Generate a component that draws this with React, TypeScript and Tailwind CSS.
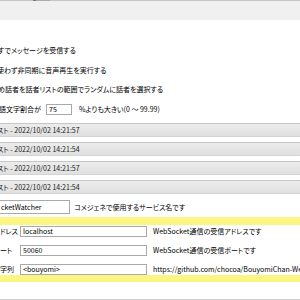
const font = { fontFamily: '"Noto Sans CJK JP", "Noto Sans", sans-serif' }

function Bar({ time }: { time: string }) {
  return (
    <div className="h-[14px] flex items-center border-t border-[#c6c6c6] border-b border-b-[#d4d4d4] bg-gradient-to-b from-[#ececec] to-[#e0e0e0] whitespace-nowrap">
      <span className="-ml-[3px] text-[#222]">スト - 2022/10/02 {time}</span>
    </div>
  )
}

function Field({ label, value, note }: { label: string; value: string; note: string }) {
  return (
    <div className="h-[11px] flex items-center whitespace-nowrap">
      <div className="w-[20px] shrink-0">{label}</div>
      <div className="w-[127px] h-[11px] shrink-0 border border-[#a9a9a9] bg-white flex items-center px-[2px]">{value}</div>
      <div className="ml-[6px]">{note}</div>
    </div>
  )
}

export default function App() {
  return (
    <div
      className="w-[300px] h-[300px] overflow-hidden bg-white text-[7px] leading-none text-black relative [font-feature-settings:'palt']"
      style={font}
    >
      {/* top strip */}
      <div className="h-[20px] bg-[#f0f0f0] border-t border-[#c4c4c4] relative">
        <div className="absolute -top-px left-[33px] w-[3px] h-px bg-[#777]" />
        <div className="absolute -top-px left-[36px] w-[14px] h-px bg-[#aaa]" />
      </div>

      <div className="mt-[24px] h-[12px] flex items-center whitespace-nowrap">
        <span className="-ml-[2px]">すでメッセージを受信する</span>
      </div>
      <div className="mt-[8px] h-[12px] flex items-center whitespace-nowrap">
        <span className="-ml-[3px]">使わず非同期に音声再生を実行する</span>
      </div>
      <div className="mt-[7px] h-[12px] flex items-center whitespace-nowrap">
        <span className="-ml-[2px]">め話者を話者リストの範囲でランダムに話者を選択する</span>
      </div>
      <div className="mt-[8px] h-[12px] flex items-center whitespace-nowrap">
        <span className="-ml-[1px] w-[47px]">語文字割合が</span>
        <div className="w-[26px] h-[11px] border border-[#a9a9a9] flex items-center px-[2px]">75</div>
        <span className="ml-[7px]">%よりも大きい(0 ～ 99.99)</span>
      </div>

      <div className="mt-[8px] flex flex-col gap-[5px]">
        <Bar time="14:21:57" />
        <Bar time="14:21:54" />
        <Bar time="14:21:57" />
        <Bar time="14:21:54" />
      </div>

      <div className="mt-[6px] h-[14px] flex items-center whitespace-nowrap">
        <div className="w-[70px] h-[14px] border border-l-0 border-[#a9a9a9] flex items-center pl-[1px]">cketWatcher</div>
        <span className="ml-[4px]">コメジェネで使用するサービス名です</span>
      </div>

      <div className="mt-[3px] h-[8px] bg-[#fbf684]" />
      <div className="mt-[1px] flex flex-col gap-[8px]">
        <Field label="ドレス" value="localhost" note="WebSocket通信の受信アドレスです" />
        <Field label="ート" value="50060" note="WebSocket通信の受信ポートです" />
        <Field label="字列" value="<bouyomi>" note="https://github.com/chocoa/BouyomiChan-WebSocket-Plugin" />
      </div>
      <div className="h-[7px] bg-[#fbf684]" />

      <div className="absolute left-0 right-0 bottom-0 h-px bg-[#d0d0d0]" />
    </div>
  )
}
